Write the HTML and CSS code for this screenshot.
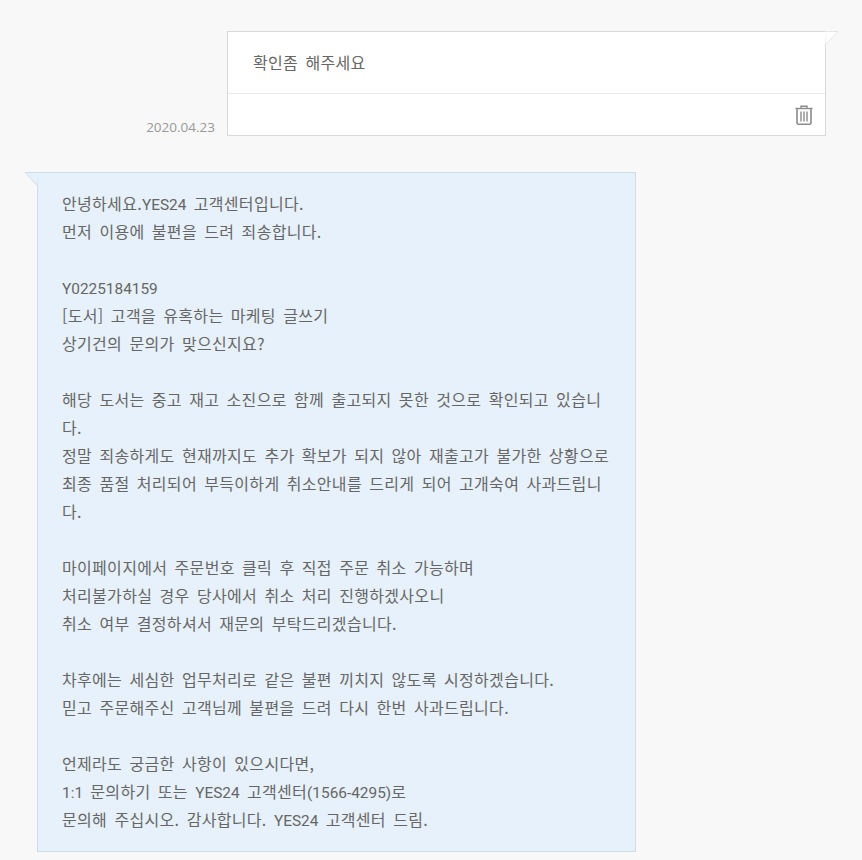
FILE: index.html
```html
<!DOCTYPE html>
<html lang="ko">

	<head>
		<meta charset="utf-8">
		<title>1:1 문의</title>
		<link rel="stylesheet" href="styles.css">
	</head>

	<body>

		<section class="row-question">
			<span class="date">2020.04.23</span>
			<div class="bubble-question">
				<svg class="tail-right" width="14" height="14" viewBox="0 0 14 14">
					<path d="M0 0.5H13L0.5 13.5" fill="#fff" stroke="#e6e6e6"/>
				</svg>
				<p class="question-text">확인좀 해주세요</p>
				<div class="question-tools">
					<svg class="trash" width="18" height="20" viewBox="0 0 18 20" fill="none" stroke="#8c8c8c">
						<path d="M0.5 3.5H17.5" stroke-width="1.4"/>
						<path d="M6 3V1.2H12V3" stroke-width="1.4"/>
						<path d="M2 4V18.2L3 19.2H15L16 18.2V4" stroke-width="1.6"/>
						<path d="M6 6.5V16.5M9 6.5V16.5M12 6.5V16.5" stroke-width="1.4"/>
					</svg>
				</div>
			</div>
		</section>

		<section class="bubble-answer">
			<svg class="tail-left" width="14" height="14" viewBox="0 0 14 14">
				<path d="M14 0.5H1L13.5 13.5" fill="#e6f1fb" stroke="#cfdde9"/>
			</svg>
			<p class="answer-text">안녕하세요.<span class="en">YES24</span> 고객센터입니다.<br>
			먼저 이용에 불편을 드려 죄송합니다.<br>
			<br>
			<span class="en">Y0225184159</span><br>
			[도서] 고객을 유혹하는 마케팅 글쓰기<br>
			상기건의 문의가 맞으신지요?<br>
			<br>
			해당 도서는 중고 재고 소진으로 함께 출고되지 못한 것으로 확인되고 있습니<br>
			다.<br>
			정말 죄송하게도 현재까지도 추가 확보가 되지 않아 재출고가 불가한 상황으로<br>
			최종 품절 처리되어 부득이하게 취소안내를 드리게 되어 고개숙여 사과드립니<br>
			다.<br>
			<br>
			마이페이지에서 주문번호 클릭 후 직접 주문 취소 가능하며<br>
			처리불가하실 경우 당사에서 취소 처리 진행하겠사오니<br>
			취소 여부 결정하셔서 재문의 부탁드리겠습니다.<br>
			<br>
			차후에는 세심한 업무처리로 같은 불편 끼치지 않도록 시정하겠습니다.<br>
			믿고 주문해주신 고객님께 불편을 드려 다시 한번 사과드립니다.<br>
			<br>
			언제라도 궁금한 사항이 있으시다면,<br>
			<span class="en">1:1</span> 문의하기 또는 <span class="en">YES24</span> 고객센터<span class="en">(1566-4295)</span>로<br>
			문의해 주십시오. 감사합니다. <span class="en">YES24</span> 고객센터 드림.</p>
		</section>

	</body>

</html>
```

FILE: styles.css
```css
html {
	background: #f8f8f8;
}

body {
	margin: 0;
	padding: 31px 36px 8px 37px;
	background: #f8f8f8;
	color: #666666;
	font-family: "Noto Sans CJK KR", "Open Sans", sans-serif;
	font-size: 16px;
	letter-spacing: 0.32px;
	word-spacing: 2.5px;
	overflow-x: hidden;
}

p {
	margin: 0;
}

.en {
	font-family: Roboto, sans-serif;
	font-size: 15.4px;
	line-height: 1;
	letter-spacing: 0;
	word-spacing: 0;
}

.row-question {
	display: flex;
	justify-content: flex-end;
	align-items: flex-end;
	gap: 12px;
}

.date {
	color: #999999;
	font-family: "Open Sans", sans-serif;
	font-size: 13.5px;
	letter-spacing: 0;
	line-height: 18px;
	margin-bottom: -7px;
	padding-bottom: 7px;
}

.bubble-question {
	position: relative;
	width: 597px;
	background: #ffffff;
	border: 1px solid #d9d9d9;
}

.tail-right {
	position: absolute;
	top: -1px;
	right: -14px;
}

.question-text {
	height: 61px;
	padding-left: 25px;
	line-height: 61px;
	border-bottom: 1px solid #e9e9e9;
}

.question-tools {
	display: flex;
	justify-content: flex-end;
	align-items: center;
	height: 41px;
	padding-right: 12px;
}

.bubble-answer {
	position: relative;
	width: 597px;
	margin-top: 36px;
	padding: 16px 0 18px 0;
	background: #e6f1fb;
	border: 1px solid #cfdde9;
}

.tail-left {
	position: absolute;
	top: -1px;
	left: -14px;
}

.answer-text {
	padding-left: 24px;
	line-height: 28px;
	white-space: nowrap;
}
```
